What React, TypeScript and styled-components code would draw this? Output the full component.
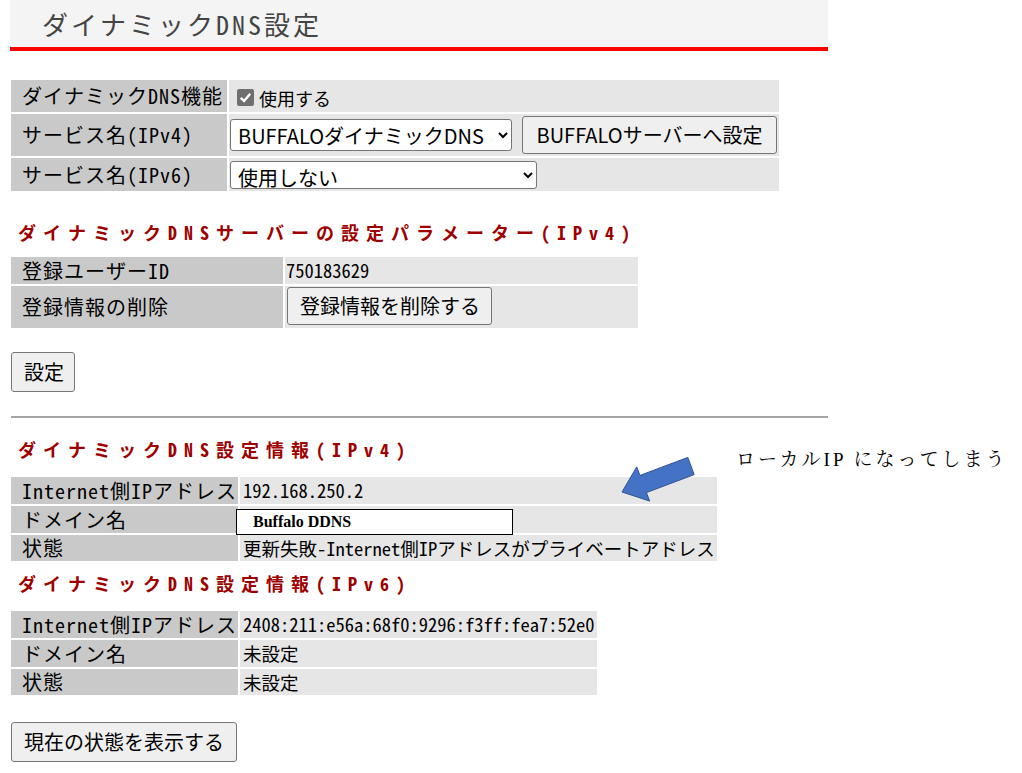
import React from "react";
import styled, { createGlobalStyle } from "styled-components";

const GOTHIC = `"Noto Sans Mono CJK JP", "Noto Sans CJK JP", monospace`;
const UI = `"Noto Sans CJK JP", "Noto Sans", sans-serif`;
const MINCHO = `"Liberation Serif", "Noto Serif CJK JP", "Noto Sans CJK JP", serif`;

const Global = createGlobalStyle`
  html, body { margin: 0; padding: 0; background: #fff; }
  body { font-family: ${UI}; color: #000; }
  * { box-sizing: border-box; }
`;

const Page = styled.div`
  position: relative;
  width: 1022px;
  height: 773px;
  overflow: hidden;
  padding-left: 10px;
`;

const Header = styled.h1`
  margin: 0;
  width: 818px;
  height: 51px;
  background: #f4f4f4;
  border-bottom: 4px solid #ff0000;
  padding-left: 32px;
  font: 400 26px/47px ${GOTHIC};
  letter-spacing: 3px;
  color: #444;
`;

const Body = styled.div`
  display: flex;
  flex-direction: column;
  align-items: flex-start;
  padding-left: 1px;
`;

const Grid = styled.div<{ $cols: string; $rows: string; $mt: number }>`
  display: grid;
  grid-template-columns: ${(p) => p.$cols};
  grid-template-rows: ${(p) => p.$rows};
  gap: 2px;
  margin-top: ${(p) => p.$mt}px;
`;

const Label = styled.div`
  background: #c9c9c9;
  display: flex;
  align-items: center;
  padding-left: 11px;
  font: 400 20px/1 ${GOTHIC};
  letter-spacing: 1px;
  white-space: nowrap;
`;

const Value = styled.div<{ $pl?: number; $top?: boolean }>`
  position: relative;
  background: #e6e6e6;
  display: flex;
  align-items: ${(p) => (p.$top ? "flex-start" : "center")};
  gap: 10px;
  padding-left: ${(p) => p.$pl ?? 3}px;
  padding-top: ${(p) => (p.$top ? 1 : 0)}px;
  font: 400 18.5px/1 ${GOTHIC};
  white-space: nowrap;
`;

const CheckLabel = styled.label`
  display: flex;
  align-items: center;
  gap: 5px;
  font: 400 18px/1 ${UI};
  padding-top: 3px;
`;

const CheckBox = styled.span`
  width: 17px;
  height: 17px;
  border-radius: 2px;
  background: #6f6f6f;
  display: inline-flex;
  align-items: center;
  justify-content: center;
`;

const Select = styled.select<{ $w: number; $h: number }>`
  width: ${(p) => p.$w}px;
  height: ${(p) => p.$h}px;
  font: 400 20px ${UI};
  color: #000;
  background: #fff;
  border: 1px solid #767676;
  border-radius: 3px;
  padding: 0 3px;
`;

const Button = styled.button<{ $h: number; $w?: number }>`
  height: ${(p) => p.$h}px;
  ${(p) => (p.$w ? `width: ${p.$w}px;` : "")}
  padding: 0 12px;
  font: 400 20px/1 ${UI};
  color: #000;
  background: #efefef;
  border: 1px solid #767676;
  border-radius: 3px;
  white-space: nowrap;
`;

const SectionTitle = styled.h2<{ $mt: number }>`
  margin: ${(p) => p.$mt}px 0 0 7px;
  font: 700 18px/24px ${GOTHIC};
  letter-spacing: 7px;
  color: #9e0000;
  white-space: nowrap;
`;

const Rule = styled.hr`
  width: 817px;
  height: 2px;
  margin: 24px 0 0 0;
  border: none;
  background: #a6a6a6;
`;

const Spacer = styled.div<{ $h: number }>`
  height: ${(p) => p.$h}px;
`;

const NameBox = styled.div`
  position: absolute;
  left: -4px;
  top: 3px;
  width: 277px;
  height: 26px;
  background: #fff;
  border: 1px solid #000;
  padding-left: 16px;
  display: flex;
  align-items: center;
  font: 700 16px/1 ${MINCHO};
`;

const Note = styled.div`
  position: absolute;
  left: 736px;
  top: 448px;
  font: 400 19px/24px ${MINCHO};
  letter-spacing: 3px;
  color: #000;
  white-space: nowrap;
`;

const ArrowSvg = styled.svg`
  position: absolute;
  left: 615px;
  top: 450px;
`;

function Check() {
  return (
    <CheckBox>
      <svg width="13" height="13" viewBox="0 0 11 11">
        <path d="M1.5 5.8 L4.3 8.5 L9.5 2.3" fill="none" stroke="#fff" strokeWidth="2" />
      </svg>
    </CheckBox>
  );
}

export default function App() {
  return (
    <>
      <Global />
      <Page>
        <Header>ダイナミックDNS設定</Header>
        <Body>
          <Grid $cols="216px 550px" $rows="32px 42px 33px" $mt={29}>
            <Label>ダイナミックDNS機能</Label>
            <Value $pl={8}>
              <CheckLabel>
                <Check />
                使用する
              </CheckLabel>
            </Value>
            <Label>サービス名(IPv4)</Label>
            <Value $pl={1}>
              <Select $w={282} $h={32} defaultValue="b">
                <option value="b">BUFFALOダイナミックDNS</option>
              </Select>
              <Button $h={38} $w={255}>BUFFALOサーバーへ設定</Button>
            </Value>
            <Label>サービス名(IPv6)</Label>
            <Value $pl={1}>
              <Select $w={307} $h={28} defaultValue="n">
                <option value="n">使用しない</option>
              </Select>
            </Value>
          </Grid>

          <SectionTitle $mt={29}>ダイナミックDNSサーバーの設定パラメーター(IPv4)</SectionTitle>
          <Grid $cols="272px 353px" $rows="27px 42px" $mt={13}>
            <Label>登録ユーザーID</Label>
            <Value $pl={1}>750183629</Value>
            <Label>登録情報の削除</Label>
            <Value $pl={2} $top>
              <Button $h={38} $w={205}>登録情報を削除する</Button>
            </Value>
          </Grid>

          <Spacer $h={24} />
          <Button $h={40} $w={64}>設定</Button>

          <Rule />

          <SectionTitle $mt={19}>ダイナミックDNS設定情報(IPv4)</SectionTitle>
          <Grid $cols="227px 477px" $rows="27px 27px 26px" $mt={16}>
            <Label>Internet側IPアドレス</Label>
            <Value>192.168.250.2</Value>
            <Label>ドメイン名</Label>
            <Value>
              <NameBox>Buffalo DDNS</NameBox>
            </Value>
            <Label>状態</Label>
            <Value>更新失敗-Internet側IPアドレスがプライベートアドレス</Value>
          </Grid>

          <SectionTitle $mt={10}>ダイナミックDNS設定情報(IPv6)</SectionTitle>
          <Grid $cols="227px 357px" $rows="27px 27px 26px" $mt={16}>
            <Label>Internet側IPアドレス</Label>
            <Value>2408:211:e56a:68f0:9296:f3ff:fea7:52e0</Value>
            <Label>ドメイン名</Label>
            <Value>未設定</Value>
            <Label>状態</Label>
            <Value>未設定</Value>
          </Grid>

          <Spacer $h={27} />
          <Button $h={40}>現在の状態を表示する</Button>
        </Body>

        <ArrowSvg width="90" height="60" viewBox="615 450 90 60">
          <polygon
            points="622,492 636.7,466.9 640,475.4 687.8,457.4 694.2,474.6 646.4,492.6 649.7,501.1"
            fill="#4472c4"
            stroke="#2f528f"
            strokeWidth="1"
          />
        </ArrowSvg>
        <Note>ローカルIP になってしまう</Note>
      </Page>
    </>
  );
}
